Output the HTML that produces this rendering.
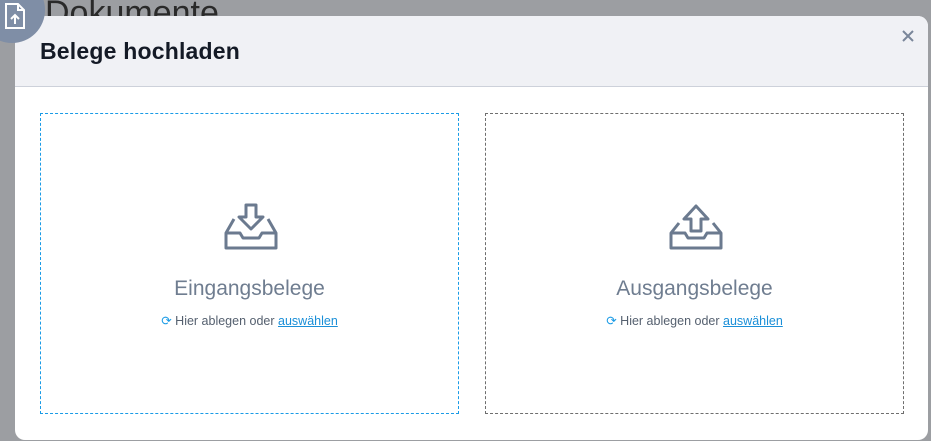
<!DOCTYPE html>
<html><head><style>
body{margin:0;width:931px;height:441px;overflow:hidden;background:#9c9ea2;font-family:"Liberation Sans",sans-serif;position:relative}
.bgtxt{position:absolute;left:45px;top:-6px;font-size:34px;color:#2a2a2a}
.modal{position:absolute;left:15px;top:16px;width:913px;height:424px;background:#fff;border-radius:10px;overflow:hidden}
.hdr{height:70px;background:#f0f1f5;border-bottom:1.5px solid #cdd1da;position:relative}
.hdr h1{margin:0;position:absolute;left:25px;top:22px;font-size:23px;font-weight:bold;color:#141a26;letter-spacing:0.2px}
.x{position:absolute;right:12px;top:12px}
.box{position:absolute;top:97px;width:419px;height:301px;border:1px dashed #6e6e6e;box-sizing:border-box;text-align:center}
.box.a{left:25px;border-color:#1a9be6}
.box.b{left:470px}
.ic{position:absolute;left:183px;top:89px}
.t{position:absolute;left:0;right:0;top:163px;font-size:21px;color:#6f7d90}
.s{position:absolute;left:0;right:0;top:199px;font-size:12.5px;color:#55606f}
.s a{color:#1a8fd8;text-decoration:underline}
.circ{position:absolute;left:-21px;top:-23px;width:66px;height:66px;border-radius:50%;background:#7f8ea6}
</style></head><body>
<div class="bgtxt">Dokumente</div>
<div class="modal">
<div class="hdr"><h1>Belege hochladen</h1>
<svg class="x" width="16" height="16" viewBox="0 0 16 16"><path d="M3 3L13 13M13 3L3 13" stroke="#7a869a" stroke-width="2"/></svg></div>
<div class="box a">
<svg class="ic" width="54" height="48" viewBox="0 0 54 48" fill="none" stroke="#6b7a8f" stroke-width="3" stroke-linejoin="round"><path d="M22 2h10v12h7L27 26 15 14h7z"/><path d="M10 16L2 30V45H52V30L44 16M2 30H16l3 5H35l3-5H52"/></svg>
<div class="t">Eingangsbelege</div>
<div class="s"><span style="color:#1a9be6">⟳</span> Hier ablegen oder <a>auswählen</a></div></div>
<div class="box b">
<svg class="ic" width="54" height="48" viewBox="0 0 54 48" fill="none" stroke="#6b7a8f" stroke-width="3" stroke-linejoin="round"><path d="M22 28h10V16h7L27 3 15 16h7z"/><path d="M10 20L2 30V45H52V30L44 20M2 30H16l3 5H35l3-5H52"/></svg>
<div class="t">Ausgangsbelege</div>
<div class="s"><span style="color:#1a9be6">⟳</span> Hier ablegen oder <a>auswählen</a></div></div>
</div>
<div class="circ"></div>
<svg style="position:absolute;left:4px;top:2px" width="22" height="28" viewBox="0 0 22 28" fill="none" stroke="#fff" stroke-width="2"><path d="M2 2h12l6 6v18H2z"/><path d="M14 2v6h6M11 22V13M7 17l4-4 4 4"/></svg>
</body></html>
